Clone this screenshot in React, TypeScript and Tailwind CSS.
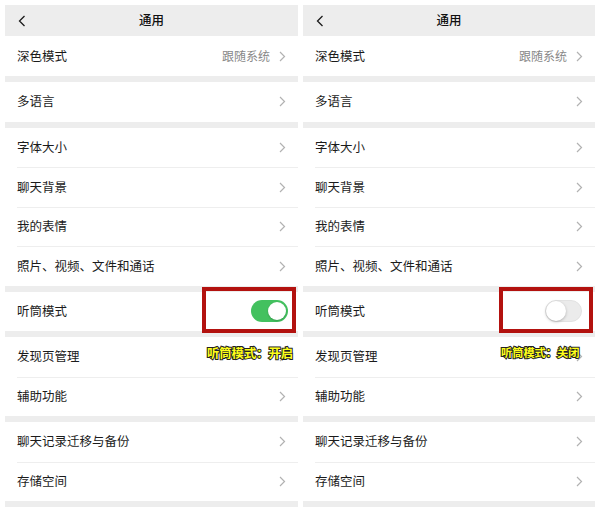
import { ReactNode } from "react";

const font = { fontFamily: '"Noto Sans CJK SC", "Noto Sans", sans-serif' };

const Chevron = () => (
    <svg width="7" height="11" viewBox="0 0 7 11" className="shrink-0">
        <path d="M1 1l4.5 4.5L1 10" fill="none" stroke="#b2b2b2" strokeWidth="1.2" />
    </svg>
);

const Row = ({ label, value, first, children }: { label: string; value?: string; first?: boolean; children?: ReactNode }) => (
    <div className="bg-white pl-[12px]">
        <div className={`flex h-[39.5px] items-center justify-between pr-[12px] ${first ? "" : "border-t border-[#eeeeee]"}`}>
            <span className="text-[12.5px] text-[#1b1b1b]">{label}</span>
            {children ?? (
                <div className="flex items-center gap-[9px]">
                    {value && <span className="text-[12px] text-[#888888]">{value}</span>}
                    <Chevron />
                </div>
            )}
        </div>
    </div>
);

const Toggle = ({ on }: { on: boolean }) =>
    on ? (
        <div className="flex h-[22px] w-[37px] items-center justify-end rounded-full bg-[#43c15f] pr-[2px]">
            <div className="h-[18px] w-[18px] rounded-full bg-white shadow-[0_1px_2px_rgba(0,0,0,0.2)]" />
        </div>
    ) : (
        <div className="flex h-[22px] w-[37px] items-center rounded-full border border-[#e2e2e2] bg-[#ebebeb]">
            <div className="h-[20px] w-[20px] rounded-full bg-white shadow-[0_1px_3px_rgba(0,0,0,0.25)]" />
        </div>
    );

const Phone = ({ on, width }: { on: boolean; width: string }) => (
    <div className={`relative flex flex-col gap-[6px] bg-[#ededed] pb-[6px] ${width}`}>
        <div>
            <div className="relative flex h-[31px] items-center justify-center">
                <svg width="8" height="12" viewBox="0 0 8 12" className="absolute left-[13px]">
                    <path d="M6.5 1L1.5 6l5 5" fill="none" stroke="#1b1b1b" strokeWidth="1.3" />
                </svg>
                <span className="text-[12.5px] font-medium text-[#111]">通用</span>
            </div>
            <div className="bg-white">
                <div className="flex h-[40px] items-center justify-between pl-[12px] pr-[12px]">
                    <span className="text-[12.5px] text-[#1b1b1b]">深色模式</span>
                    <div className="flex items-center gap-[9px]">
                        <span className="text-[12px] text-[#888888]">跟随系统</span>
                        <Chevron />
                    </div>
                </div>
            </div>
        </div>
        <Row label="多语言" first />
        <div>
            <Row label="字体大小" first />
            <Row label="聊天背景" />
            <Row label="我的表情" />
            <Row label="照片、视频、文件和通话" />
        </div>
        <Row label="听筒模式" first>
            <div className={on ? "mr-[-2px]" : "mr-[1px]"}>
                <Toggle on={on} />
            </div>
        </Row>
        <div>
            <Row label="发现页管理" first />
            <Row label="辅助功能" />
        </div>
        <div>
            <Row label="聊天记录迁移与备份" first />
            <Row label="存储空间" />
        </div>

        <div className={`absolute top-[282px] h-[46px] w-[94px] border-[4px] border-[#b3120f] ${on ? "left-[197px]" : "left-[196px]"}`} />
        <span
            className={`absolute top-[339px] font-bold text-[#ffff1a] [-webkit-text-stroke:2px_#222] [paint-order:stroke_fill] ${on ? "left-[202px] text-[12.3px]" : "left-[198px] text-[11.2px]"}`}
        >
            {on ? "听筒模式：开启" : "听筒模式：关闭"}
        </span>
    </div>
);

export default function App() {
    return (
        <div className="flex h-[515px] w-[600px] items-start gap-[5px] bg-white pl-[5px] pt-[5px]" style={font}>
            <Phone on={true} width="w-[293px]" />
            <Phone on={false} width="w-[292px]" />
        </div>
    );
}
